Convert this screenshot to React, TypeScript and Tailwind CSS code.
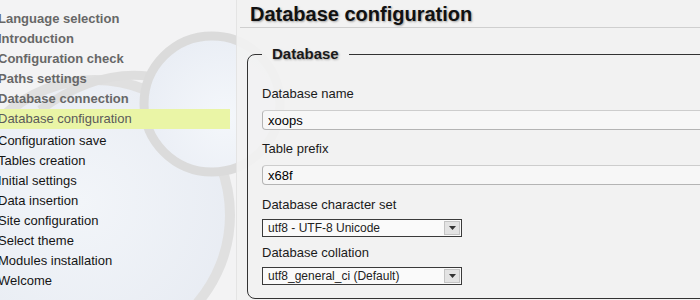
import React from 'react';

const steps = [
  { label: 'Language selection', state: 'done' },
  { label: 'Introduction', state: 'done' },
  { label: 'Configuration check', state: 'done' },
  { label: 'Paths settings', state: 'done' },
  { label: 'Database connection', state: 'done' },
  { label: 'Database configuration', state: 'current' },
  { label: 'Configuration save', state: 'todo' },
  { label: 'Tables creation', state: 'todo' },
  { label: 'Initial settings', state: 'todo' },
  { label: 'Data insertion', state: 'todo' },
  { label: 'Site configuration', state: 'todo' },
  { label: 'Select theme', state: 'todo' },
  { label: 'Modules installation', state: 'todo' },
  { label: 'Welcome', state: 'todo' },
];

function Backdrop() {
  return (
    <svg className="pointer-events-none absolute inset-0" width="700" height="300" viewBox="0 0 700 300">
      <defs>
        <radialGradient id="lensBig" cx="0.45" cy="0.45" r="0.6">
          <stop offset="0" stopColor="#f2f5f9" />
          <stop offset="1" stopColor="#e8ecf3" />
        </radialGradient>
        <radialGradient id="lensSmall" cx="0.6" cy="0.6" r="0.6">
          <stop offset="0" stopColor="#f4f7fb" />
          <stop offset="1" stopColor="#eaeef5" />
        </radialGradient>
      </defs>
      <rect width="700" height="300" fill="#f3f3f4" />
      <circle cx="95" cy="215" r="135" fill="url(#lensBig)" stroke="#e0e0e0" strokeWidth="10" />
      <path d="M40 110 Q95 70 148 76" fill="none" stroke="#dedede" strokeWidth="9" />
      <circle cx="212" cy="104" r="68" fill="url(#lensSmall)" stroke="#dbdbdb" strokeWidth="9" />
    </svg>
  );
}

function Field({ label, value }: { label: string; value: string }) {
  return (
    <div>
      <label className="block text-[13px] leading-[18px] text-[#1a1a1a]">{label}</label>
      <input
        readOnly
        value={value}
        className="mt-[7px] block h-[20px] w-[480px] rounded-[4px] border border-[#b4b4b4] border-t-[#cdcdcd] bg-[#f7f7f7] px-[5px] text-[13px] text-black outline-none"
      />
    </div>
  );
}

function Dropdown({ label, value }: { label: string; value: string }) {
  return (
    <div>
      <label className="block text-[13px] leading-[18px] text-[#1a1a1a]">{label}</label>
      <div className="relative mt-[5px] h-[18px] w-[200px]">
        <select
          value={value}
          onChange={() => {}}
          className="block h-[18px] w-[200px] appearance-none rounded-none border border-[#3a3a3a] bg-[#fafafa] pl-[5px] text-[12px] leading-[16px] text-[#222] outline-none"
        >
          <option value={value}>{value}</option>
        </select>
        <span className="pointer-events-none absolute right-[2px] top-[2px] flex h-[14px] w-[16px] items-center justify-center border border-[#c4c4c4] bg-[#e3e3e3]">
          <svg width="7" height="4" viewBox="0 0 7 4">
            <path d="M0 0h7L3.5 4z" fill="#333" />
          </svg>
        </span>
      </div>
    </div>
  );
}

export default function App() {
  return (
    <div className="relative flex h-[300px] w-[700px] overflow-hidden font-['Liberation_Sans',Arial,sans-serif]">
      <Backdrop />

      <nav className="relative w-[236px] shrink-0 pt-[9px]">
        <ul>
          {steps.map((s) => (
            <li
              key={s.label}
              className={
                s.state === 'current'
                  ? 'mb-[2px] mr-[6px] h-[20px] bg-[#eaf5a6] text-[13px] leading-[20px] text-[#5a5a5a]'
                  : s.state === 'done'
                    ? 'h-[20px] text-[13px] font-bold leading-[20px] text-[#676767]'
                    : 'h-[20px] text-[13px] leading-[20px] text-[#151515]'
              }
            >
              <span className="ml-[-2px] whitespace-nowrap">{s.label}</span>
            </li>
          ))}
        </ul>
      </nav>

      <main className="relative min-w-0 flex-1 border-l border-[#e4e4e4] bg-[#f2f2f2]/90 pl-[3px]">
        <h1 className="border-b border-[#cfcfcf] pl-[10px] pt-[1px] text-[20px] font-bold leading-[26px] text-[#111] [text-shadow:1px_1px_2px_#a0a0a0]">
          Database configuration
        </h1>

        <fieldset className="ml-[7px] mt-[17px] w-[520px] rounded-[8px] border border-[#333] pb-[13px] pl-[14px]">
          <legend className="px-[10px] text-[15px] font-bold leading-[18px] text-[#1a1a1a] [text-shadow:1px_1px_2px_#a8a8a8]">
            Database
          </legend>
          <div className="pt-[22px]">
            <Field label="Database name" value="xoops" />
          </div>
          <div className="mt-[10px]">
            <Field label="Table prefix" value="x68f" />
          </div>
          <div className="mt-[11px]">
            <Dropdown label="Database character set" value="utf8 - UTF-8 Unicode" />
          </div>
          <div className="mt-[7px]">
            <Dropdown label="Database collation" value="utf8_general_ci (Default)" />
          </div>
        </fieldset>
      </main>
    </div>
  );
}
